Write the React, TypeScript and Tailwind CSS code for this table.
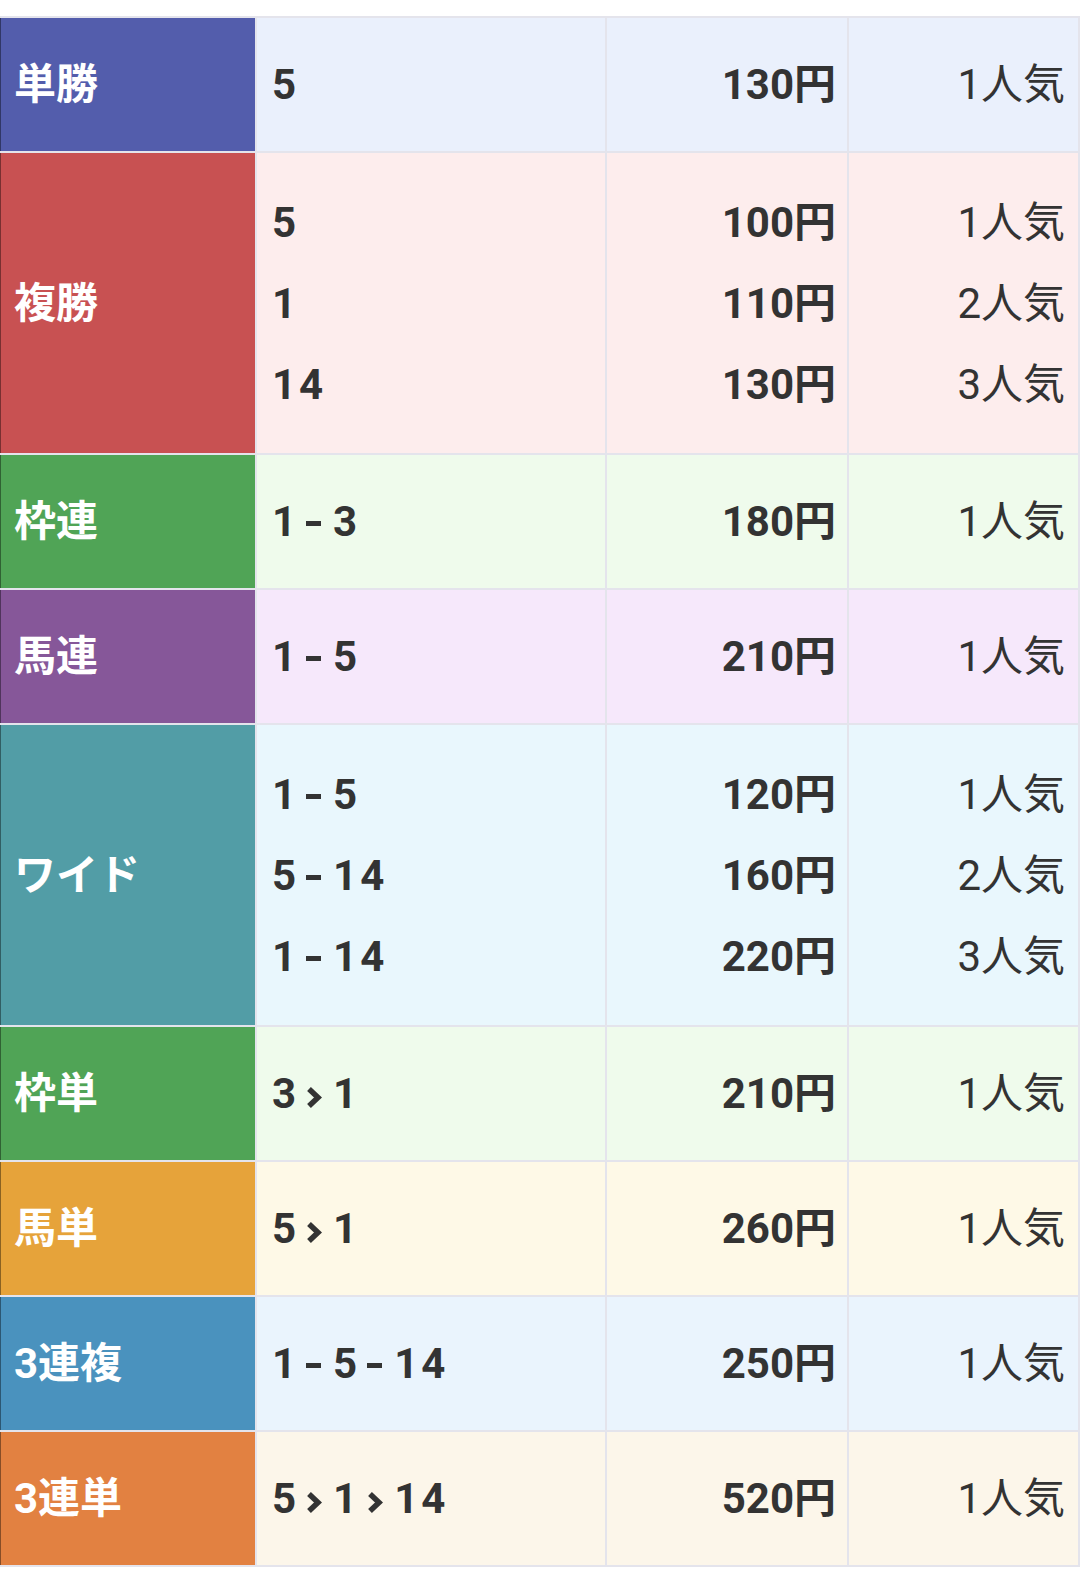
import React from 'react';

type Line = { combo: string[]; pay: string; pop: string };
type Row = { label: string; labelBg: string; cellBg: string; lines: Line[] };

const rows: Row[] = [
  { label: '単勝', labelBg: 'bg-[#535DAC]', cellBg: 'bg-[#EAF0FC]', lines: [{ combo: ['5'], pay: '130円', pop: '1人気' }] },
  {
    label: '複勝', labelBg: 'bg-[#C85152]', cellBg: 'bg-[#FDEDED]', lines: [
      { combo: ['5'], pay: '100円', pop: '1人気' },
      { combo: ['1'], pay: '110円', pop: '2人気' },
      { combo: ['14'], pay: '130円', pop: '3人気' },
    ],
  },
  { label: '枠連', labelBg: 'bg-[#50A456]', cellBg: 'bg-[#EFFBEC]', lines: [{ combo: ['1', '-', '3'], pay: '180円', pop: '1人気' }] },
  { label: '馬連', labelBg: 'bg-[#865799]', cellBg: 'bg-[#F6E8FB]', lines: [{ combo: ['1', '-', '5'], pay: '210円', pop: '1人気' }] },
  {
    label: 'ワイド', labelBg: 'bg-[#529DA6]', cellBg: 'bg-[#E9F7FD]', lines: [
      { combo: ['1', '-', '5'], pay: '120円', pop: '1人気' },
      { combo: ['5', '-', '14'], pay: '160円', pop: '2人気' },
      { combo: ['1', '-', '14'], pay: '220円', pop: '3人気' },
    ],
  },
  { label: '枠単', labelBg: 'bg-[#50A456]', cellBg: 'bg-[#EFFBEC]', lines: [{ combo: ['3', '>', '1'], pay: '210円', pop: '1人気' }] },
  { label: '馬単', labelBg: 'bg-[#E6A33A]', cellBg: 'bg-[#FEF9E7]', lines: [{ combo: ['5', '>', '1'], pay: '260円', pop: '1人気' }] },
  { label: '3連複', labelBg: 'bg-[#4A92BE]', cellBg: 'bg-[#EAF4FD]', lines: [{ combo: ['1', '-', '5', '-', '14'], pay: '250円', pop: '1人気' }] },
  { label: '3連単', labelBg: 'bg-[#E28141]', cellBg: 'bg-[#FCF6EA]', lines: [{ combo: ['5', '>', '1', '>', '14'], pay: '520円', pop: '1人気' }] },
];

const Dash = () => (
  <span className="inline-block w-[15px] h-[5px] bg-[#333] ml-[7px] mr-[12px] align-middle relative -top-[1px]" />
);

const Chevron = () => (
  <svg width="18" height="22" viewBox="0 0 18 22" className="inline-block ml-[6px] mr-[10px]">
    <polyline points="4,3 13,11.5 4,20" fill="none" stroke="#333" strokeWidth="5.5" strokeLinejoin="miter" />
  </svg>
);

const Combo = ({ parts }: { parts: string[] }) => (
  <span className="whitespace-nowrap">
    {parts.map((p, i) =>
      p === '-' ? <Dash key={i} /> : p === '>' ? <Chevron key={i} /> : <span key={i} className="tracking-[3px]">{p}</span>
    )}
  </span>
);

export default function App() {
  return (
    <div className="w-[1080px] h-[1581px] bg-white pt-[16px] font-[Roboto,'Noto_Sans_CJK_JP',sans-serif] text-[42px] text-[#333]">
      <div className="flex flex-col gap-[2px] bg-[#E4E4EC] py-[2px] pr-[2px]">
        {rows.map(row => {
          const tall = row.lines.length > 1;
          return (
            <div
              key={row.label}
              className={`grid grid-cols-[255px_348px_240px_1fr] gap-[2px] ${tall ? 'h-[300px]' : 'h-[133px]'}`}
            >
              <div className={`${row.labelBg} flex items-center pl-[13px] text-white font-bold border-l border-black/40`}>
                {row.label}
              </div>
              <div className={`${row.cellBg} flex flex-col justify-center pl-[15px] font-bold leading-[81px]`}>
                {row.lines.map((l, i) => (
                  <div key={i}>
                    <Combo parts={l.combo} />
                  </div>
                ))}
              </div>
              <div className={`${row.cellBg} flex flex-col justify-center items-end pr-[11px] font-bold leading-[81px]`}>
                {row.lines.map((l, i) => (
                  <div key={i}>{l.pay}</div>
                ))}
              </div>
              <div className={`${row.cellBg} flex flex-col justify-center items-end pr-[13px] leading-[81px]`}>
                {row.lines.map((l, i) => (
                  <div key={i}>{l.pop}</div>
                ))}
              </div>
            </div>
          );
        })}
      </div>
    </div>
  );
}
